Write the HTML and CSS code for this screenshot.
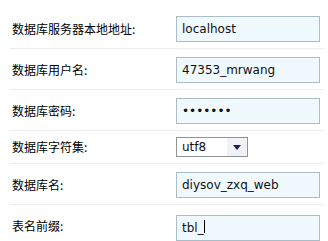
FILE: index.html
```html
<!DOCTYPE html>
<html lang="zh-CN">
<head>
  <meta charset="UTF-8" />
  <title>数据库设置</title>
  <link rel="stylesheet" href="styles.css">
</head>
<body>
  <div class="form">
    <div class="row">
      <label class="label">数据库服务器本地地址:</label>
      <input class="field" type="text" value="localhost" />
    </div>
    <div class="row">
      <label class="label">数据库用户名:</label>
      <input class="field" type="text" value="47353_mrwang" />
    </div>
    <div class="row">
      <label class="label">数据库密码:</label>
      <input class="field" type="password" value="1234567" />
    </div>
    <div class="row row-select">
      <label class="label">数据库字符集:</label>
      <span class="select-wrap">
        <select class="select">
          <option>utf8</option>
          <option>gbk</option>
        </select>
        <span class="select-btn">
          <svg width="8" height="5" viewBox="0 0 8 5"><path d="M0 0 H8 L4 5 Z" fill="#1a1f5c"/></svg>
        </span>
      </span>
    </div>
    <div class="row">
      <label class="label">数据库名:</label>
      <input class="field" type="text" value="diysov_zxq_web" />
    </div>
    <div class="row last">
      <label class="label">表名前缀:</label>
      <span class="field-wrap">
        <input class="field" type="text" value="tbl_" />
        <span class="caret"></span>
      </span>
    </div>
  </div>
</body>
</html>
```

FILE: styles.css
```css
body {
  margin: 0;
  background: #fff;
  font-family: "Noto Sans CJK SC", sans-serif;
}
.form {
  padding: 8px 4px 0 10px;
}
.row {
  display: flex;
  align-items: center;
  padding: 8px 0 6px 0;
  border-bottom: 1px solid #ededed;
}
.row.last {
  border-bottom: none;
}
.row-select {
  padding: 6px 0 6px 0;
}
.label {
  width: 164px;
  padding-left: 2px;
  font-size: 12px;
  line-height: 14px;
  color: #000;
}
.field {
  box-sizing: border-box;
  width: 144px;
  height: 26px;
  margin: 0;
  padding: 0 5px;
  border: 1px solid #a9bec8;
  background: #f0f9fe;
  font-family: "DejaVu Sans", sans-serif;
  font-size: 12px;
  color: #111;
  outline: none;
}
.field-wrap {
  position: relative;
  display: block;
  height: 26px;
}
.caret {
  position: absolute;
  left: 28px;
  top: 7px;
  width: 1px;
  height: 13px;
  background: #000;
}
.select-wrap {
  position: relative;
  display: block;
  width: 72px;
  height: 20px;
}
.select {
  appearance: none;
  display: block;
  box-sizing: border-box;
  width: 72px;
  height: 20px;
  margin: 0;
  padding: 0 0 0 5px;
  border: 1px solid #8f9497;
  border-radius: 0;
  background: #fff;
  font-family: "DejaVu Sans", sans-serif;
  font-size: 12px;
  color: #111;
  outline: none;
}
.select-btn {
  position: absolute;
  top: 1px;
  right: 1px;
  width: 20px;
  height: 18px;
  background: #f1f1f6;
  display: flex;
  align-items: center;
  justify-content: center;
  pointer-events: none;
}
.select-btn svg {
  display: block;
}
```
